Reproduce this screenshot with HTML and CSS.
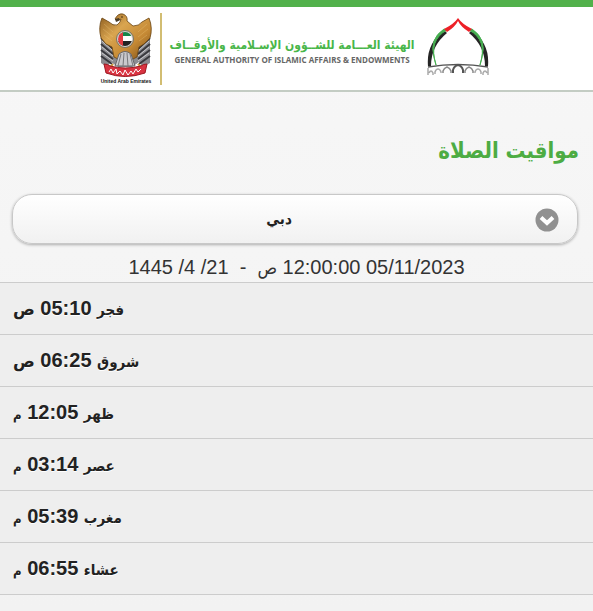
FILE: index.html
```html
<!DOCTYPE html>
<html lang="ar" dir="rtl">
<head>
<meta charset="utf-8">
<meta name="viewport" content="width=device-width, initial-scale=1">
<title>مواقيت الصلاة</title>
<link rel="stylesheet" href="styles.css">
</head>
<body>
<header class="header">
  <div class="brand" dir="ltr">
    <div class="emblem">
      <svg width="54" height="65" viewBox="0 0 54 65" aria-hidden="true">
        <defs>
          <linearGradient id="gold" x1="0" y1="0" x2="1" y2="1">
            <stop offset="0" stop-color="#8a5a1d"/><stop offset=".35" stop-color="#d9a550"/><stop offset=".65" stop-color="#c68a35"/><stop offset="1" stop-color="#734712"/>
          </linearGradient>
          <clipPath id="disc"><circle cx="26" cy="26" r="7"/></clipPath>
        </defs>
        <path d="M2 16V50l6 4 4-5 7 5h14l7-5 4 5 7-4V16L37 27H16Z" fill="#8b8b90"/>
        <path d="M2 25l12 11M2 31l12 10M2 37l12 9M2 43l11 8M51 25L39 36M51 31L39 41M51 37L39 46M51 43l-11 8" stroke="#39393e" stroke-width="2"/>
        <path d="M3 28l11 10M3 34l11 9M3 40l11 8M50 28L39 38M50 34L39 43M50 40l-11 8" stroke="#c8c8cc"/>
        <path d="M16 6Q19 0 24 1 29 3 28 8L34 13Q40 13 43 9L50 5Q54 15 51 25L45 31 40 34 38 44 32 47H21L15 44 13 34 7 31 2 25Q-1 14 3 5L10 9Q14 13 18 12 22 9 22 6L18 8Z" fill="url(#gold)" stroke="#68420f" stroke-width=".8"/>
        <path d="M16 6l4-1 1 2-4 2Z" fill="#453a27"/><circle cx="23" cy="4" r=".8" fill="#382408"/>
        <path d="M5 11l9 8M4 16l10 8M5 22l8 6M48 11l-9 8M49 16l-10 8M48 22l-8 6" stroke="#f1cc80" opacity=".3"/>
        <circle cx="26" cy="26" r="8.5" fill="#d8d5d0" stroke="#77705f"/>
        <g clip-path="url(#disc)"><path d="M19 18h15v5H19Z" fill="#16844a"/><path d="M19 23h15v5H19Z" fill="#fff"/><path d="M19 28h15v6H19Z" fill="#222"/><path d="M18 18h6v16h-6Z" fill="#e23b42"/></g>
        <path d="M20 41q6-5 12 0l4 12H16Z" fill="#c9c9cd" stroke="#66666a"/>
        <path d="M22 41l-3 12M25 40l-1 13M28 40l1 13M31 41l3 12" stroke="#77777b"/>
        <path d="M6 52q5 4 8-1M39 51q4 5 8 1" fill="none" stroke="#c8963c" stroke-width="2"/>
        <path d="M5 51Q9 51 11 53 26 57 42 53 44 51 48 51L46 60Q26 67 7 60Z" fill="#d93442" stroke="#9c1821"/>
        <path d="M10 59l2-3 2 4 3-4 1 5 3-3 3 4 2-5 3 5 3-4 2 3 3-5 2 3 3-3" fill="none" stroke="#fff"/>
      </svg>
      <span class="country">United Arab Emirates</span>
    </div>
    <div class="divider"></div>
    <div class="authority">
      <span class="authority-ar" lang="ar" dir="rtl">الهيئة العـــامة للشــؤون الإسـلامية والأوقــاف</span>
      <span class="authority-en" lang="en">GENERAL AUTHORITY OF ISLAMIC AFFAIRS &amp; ENDOWMENTS</span>
    </div>
    <svg class="dome" width="62" height="58" viewBox="0 0 62 58" aria-hidden="true">
      <path d="M1 48H4Q4 28 20 15L17 12Q-1 26 1 48ZM61 48H58Q58 28 42 15L45 12Q63 26 61 48Z" fill="#252525"/>
      <path d="M9 47Q1 22 20 12L17 11Q2 21 7 39ZM53 47Q61 22 42 12L45 11Q60 21 55 39Z" fill="#48b052" stroke="#48b052"/>
      <path d="M31 0Q27 6 17 11l3 3Q28 9 31 3Q34 9 42 14l3-3Q35 6 31 0Z" fill="#ed2027"/>
      <path d="M1 49Q31 44 61 49" fill="none" stroke="#555" stroke-width="1.5"/>
      <g fill="none" stroke="#888" stroke-width="1.5"><path d="M26 55v-3q1-4 5-5 4 1 5 5v3" stroke="#555" stroke-width="2"/><path d="M16 55v-2q1-3 4-4 3 1 4 4v2M38 55v-2q1-3 4-4 3 1 4 4v2"/><path d="M8 56v-2q1-3 3-3t3 3v1M48 55v-1q1-3 3-3t3 3v2M1 50v7M61 50v7M2 55q2-4 4 0v2M56 57v-2q2-4 4 0" stroke="#aaa"/></g>
    </svg>
  </div>
</header>
<main>
  <h1 class="title">مواقيت الصلاة</h1>
  <div class="picker">
    <select class="city" aria-label="المدينة"><option>دبي</option></select>
    <svg class="arrow" width="24" height="24" viewBox="0 0 24 24" aria-hidden="true"><circle cx="12" cy="12" r="11.5" fill="#919191"/><path d="M6 9.5l6 5.5 6-5.5" fill="none" stroke="#fff" stroke-width="4"/></svg>
  </div>
  <p class="date">05/11/2023 12:00:00 <span class="am">ص</span> &nbsp;-&nbsp; 21/ 4/ 1445</p>
  <ul class="times">
    <li><span class="name">فجر</span> 05:10 <span class="am">ص</span></li>
    <li><span class="name">شروق</span> 06:25 <span class="am">ص</span></li>
    <li><span class="name">ظهر</span> 12:05 <span class="pm">م</span></li>
    <li><span class="name">عصر</span> 03:14 <span class="pm">م</span></li>
    <li><span class="name">مغرب</span> 05:39 <span class="pm">م</span></li>
    <li><span class="name">عشاء</span> 06:55 <span class="pm">م</span></li>
  </ul>
</main>
</body>
</html>
```
FILE: styles.css
```css
* { box-sizing: border-box; }
body {
  margin: 0;
  min-height: 100vh;
  background: linear-gradient(#f7f7f7, #f2f2f2);
  color: #333;
  font-family: "Liberation Sans", "DejaVu Sans", sans-serif;
  font-size: 20px;
}
.header {
  padding-right: 6px;
  border-top: 7px solid #52b14b;
  border-bottom: 2px solid #c3ccc3;
  background: #fff;
  height: 92px;
  display: flex;
  justify-content: center;
}
.brand { display: flex; align-items: center; }
.emblem {
  display: flex;
  flex-direction: column;
  align-items: center;
  width: 56px;
}
.country {
  font-size: 5px;
  font-weight: bold;
  line-height: 7px;
  color: #111;
  white-space: nowrap;
}
.divider {
  width: 2px;
  height: 72px;
  margin: 0 8px 0 6px;
  background: #d2bd72;
}
.authority {
  display: flex;
  flex-direction: column;
  align-items: center;
  width: 244px;
  padding-top: 4px;
  white-space: nowrap;
}
.authority-ar {
  font-family: "DejaVu Sans Condensed", "DejaVu Sans", sans-serif;
  font-size: 12px;
  font-weight: bold;
  line-height: 18px;
  color: #49b649;
}
.authority-en {
  font-family: "Open Sans", sans-serif;
  font-size: 8px;
  font-weight: 700;
  line-height: 12px;
  color: #666;
}
.dome { margin: 0 0 4px 13px; }
.title {
  margin: 42px 14px 26px;
  font-family: "DejaVu Sans Condensed", "DejaVu Sans", sans-serif;
  font-size: 22px;
  line-height: 34px;
  color: #4dac43;
}
.picker {
  position: relative;
  margin: 0 15px 0 12px;
}
.city {
  display: block;
  width: 100%;
  height: 50px;
  padding: 0 48px 0 16px;
  appearance: none;
  border: 1px solid #c8c8c8;
  border-radius: 20px;
  background: linear-gradient(#fff, #f1f1f1);
  box-shadow: 0 1px 3px rgba(0, 0, 0, .3);
  color: #222;
  font-family: "DejaVu Sans Condensed", "DejaVu Sans", sans-serif;
  font-size: 15px;
  font-weight: bold;
  text-align: center;
  text-align-last: center;
}
.arrow {
  position: absolute;
  top: 14px;
  right: 19px;
  pointer-events: none;
}
.date {
  margin: 10px 0 2px;
  line-height: 26px;
  text-align: center;
}
.name, .am, .pm {
  font-family: "DejaVu Sans Condensed", "DejaVu Sans", sans-serif;
  line-height: 20px;
}
.name { font-size: 15px; }
.am { font-size: 18px; }
.pm { font-size: 13px; }
.times {
  margin: 0;
  padding: 0;
  list-style: none;
  background: #eee;
  border-top: 1px solid #ccc;
  color: #222;
  font-weight: bold;
  text-shadow: 0 1px 0 #fff;
}
.times li {
  height: 52px;
  padding: 0 13px;
  border-bottom: 1px solid #ccc;
  line-height: 50px;
  text-align: left;
}
```
